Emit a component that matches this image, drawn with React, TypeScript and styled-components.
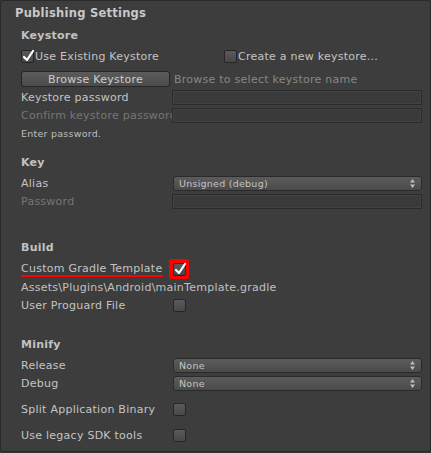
import styled, { createGlobalStyle } from "styled-components";

const GlobalStyle = createGlobalStyle`
  html, body {
    margin: 0;
    padding: 0;
    background: #353535;
  }
  body {
    font-family: "DejaVu Sans", "Liberation Sans", sans-serif;
    font-size: 11px;
    letter-spacing: 0.25px;
    color: #c4c4c4;
  }
`;

const Panel = styled.div`
  box-sizing: border-box;
  width: 431px;
  height: 452px;
  padding: 3px 8px 0 20px;
  background: #3d3d3d;
  border: 1px solid #2a2a2a;
  border-radius: 3px;
  display: flex;
  flex-direction: column;
`;

const Title = styled.div`
  height: 18px;
  line-height: 18px;
  margin-left: -6px;
  font-weight: bold;
  font-size: 11.5px;
  color: #c8c8c8;
`;

const SectionHeader = styled.div<{ $mt: number }>`
  height: 18px;
  line-height: 18px;
  margin-top: ${(p) => p.$mt}px;
  font-weight: bold;
  font-size: 11px;
  color: #c2c2c2;
`;

const Row = styled.div<{ $mt?: number }>`
  display: flex;
  align-items: center;
  height: 18px;
  margin-top: ${(p) => p.$mt ?? 0}px;
`;

const Label = styled.div<{ $muted?: boolean }>`
  width: 151px;
  flex: none;
  white-space: nowrap;
  overflow: hidden;
  color: ${(p) => (p.$muted ? "#767676" : "#c4c4c4")};
`;

const Wide = styled.div`
  white-space: nowrap;
  color: #c0c0c0;
`;

const Hint = styled.div`
  font-size: 9.5px;
  color: #bdbdbd;
  height: 18px;
  line-height: 18px;
  margin-top: 1px;
`;

const TextField = styled.div`
  box-sizing: border-box;
  width: 251px;
  height: 15px;
  background: #3a3a3a;
  border: 1px solid #2b2b2b;
  box-shadow: inset 0 0 0 1px #424242;
`;

const Popup = styled.div`
  box-sizing: border-box;
  margin-left: 1px;
  width: 249px;
  height: 15px;
  padding: 0 6px 0 5px;
  display: flex;
  align-items: center;
  justify-content: space-between;
  background: linear-gradient(#5c5c5c, #4a4a4a);
  border: 1px solid #2a2a2a;
  border-radius: 3px;
  font-size: 9.5px;
  color: #c4c4c4;
`;

const Button = styled.div`
  box-sizing: border-box;
  width: 149px;
  height: 16px;
  display: flex;
  align-items: center;
  justify-content: center;
  background: linear-gradient(#5b5b5b, #4b4b4b);
  border: 1px solid #262626;
  border-radius: 3px;
  color: #cccccc;
`;

const BrowseHint = styled.div`
  margin-left: 4px;
  color: #878787;
  white-space: nowrap;
`;

const Box = styled.div`
  box-sizing: border-box;
  width: 13px;
  height: 13px;
  flex: none;
  border-radius: 2px;
  background: linear-gradient(#5a5a5a, #484848);
  border: 1px solid #262626;
  position: relative;
`;

const Tick = styled.svg`
  position: absolute;
  left: 0px;
  top: -2px;
`;

const CheckGroup = styled.div<{ $w?: number }>`
  display: flex;
  align-items: center;
  gap: 1px;
  width: ${(p) => (p.$w ? `${p.$w}px` : "auto")};
  white-space: nowrap;
`;

const CheckSlot = styled.div`
  margin-left: 1px;
`;

const Highlight = styled.div`
  margin-left: -3px;
  width: 20px;
  height: 20px;
  border-radius: 2px;
  background: #ff0000;
  display: flex;
  align-items: center;
  justify-content: center;
`;

const Underlined = styled.span`
  display: inline-block;
  line-height: 13px;
  border-bottom: 2px solid #ff0000;
  padding-right: 1px;
`;

const Arrows = () => (
  <svg width="5" height="9" viewBox="0 0 5 9">
    <path d="M2.5 0 L5 3.5 H0 Z M2.5 9 L0 5.5 H5 Z" fill="#bdbdbd" />
  </svg>
);

function Checkbox({ checked }: { checked?: boolean }) {
  return (
    <Box>
      {checked && (
        <Tick width="13" height="14" viewBox="0 0 13 14">
          <path
            d="M2 8 L5 11 L11 2"
            stroke="#ffffff"
            strokeWidth="2.2"
            fill="none"
            strokeLinecap="round"
            strokeLinejoin="round"
          />
        </Tick>
      )}
    </Box>
  );
}

export default function App() {
  return (
    <>
      <GlobalStyle />
      <Panel>
        <Title>Publishing Settings</Title>

        <SectionHeader $mt={5}>Keystore</SectionHeader>
        <Row $mt={2}>
          <CheckGroup $w={203}>
            <Checkbox checked />
            <span>Use Existing Keystore</span>
          </CheckGroup>
          <CheckGroup>
            <Checkbox />
            <span>Create a new keystore...</span>
          </CheckGroup>
        </Row>
        <Row $mt={5}>
          <Button>Browse Keystore</Button>
          <BrowseHint>Browse to select keystore name</BrowseHint>
        </Row>
        <Row>
          <Label>Keystore password</Label>
          <TextField />
        </Row>
        <Row>
          <Label $muted>Confirm keystore password</Label>
          <TextField />
        </Row>
        <Hint>Enter password.</Hint>

        <SectionHeader $mt={11}>Key</SectionHeader>
        <Row $mt={2}>
          <Label>Alias</Label>
          <Popup>
            <span>Unsigned (debug)</span>
            <Arrows />
          </Popup>
        </Row>
        <Row>
          <Label $muted>Password</Label>
          <TextField />
        </Row>

        <SectionHeader $mt={29}>Build</SectionHeader>
        <Row $mt={3}>
          <Label>
            <Underlined>Custom Gradle Template</Underlined>
          </Label>
          <Highlight>
            <Checkbox checked />
          </Highlight>
        </Row>
        <Row>
          <Wide>Assets\Plugins\Android\mainTemplate.gradle</Wide>
        </Row>
        <Row>
          <Label>User Proguard File</Label>
          <CheckSlot>
            <Checkbox />
          </CheckSlot>
        </Row>

        <SectionHeader $mt={22}>Minify</SectionHeader>
        <Row $mt={2}>
          <Label>Release</Label>
          <Popup>
            <span>None</span>
            <Arrows />
          </Popup>
        </Row>
        <Row>
          <Label>Debug</Label>
          <Popup>
            <span>None</span>
            <Arrows />
          </Popup>
        </Row>
        <Row $mt={8}>
          <Label>Split Application Binary</Label>
          <CheckSlot>
            <Checkbox />
          </CheckSlot>
        </Row>
        <Row $mt={8}>
          <Label>Use legacy SDK tools</Label>
          <CheckSlot>
            <Checkbox />
          </CheckSlot>
        </Row>
      </Panel>
    </>
  );
}
